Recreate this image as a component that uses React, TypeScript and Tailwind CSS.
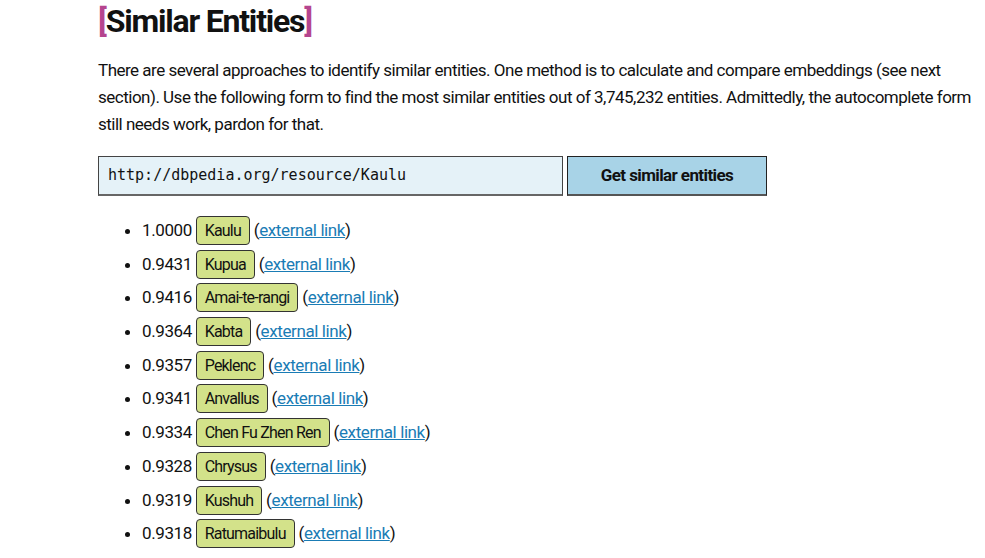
const results: [string, string][] = [
  ['1.0000', 'Kaulu'],
  ['0.9431', 'Kupua'],
  ['0.9416', 'Amai-te-rangi'],
  ['0.9364', 'Kabta'],
  ['0.9357', 'Peklenc'],
  ['0.9341', 'Anvallus'],
  ['0.9334', 'Chen Fu Zhen Ren'],
  ['0.9328', 'Chrysus'],
  ['0.9319', 'Kushuh'],
  ['0.9318', 'Ratumaibulu'],
]

export default function App() {
  return (
    <div
      className="h-[558px] w-[985px] overflow-hidden bg-white pl-[98px] pt-[2px] text-[#111]"
      style={{ fontFamily: 'Roboto, "Liberation Sans", sans-serif' }}
    >
      <h1 className="flex items-center text-[32px] font-bold leading-[38px] tracking-[-1.2px]">
        <span className="text-[#b5458f]">[</span>
        Similar Entities
        <span className="text-[#b5458f]">]</span>
      </h1>

      <p className="mt-[17px] w-[880px] text-[17px] leading-[27px] tracking-[-0.5px]">
        There are several approaches to identify similar entities. One method is to calculate and
        compare embeddings (see next section). Use the following form to find the most similar
        entities out of 3,745,232 entities. Admittedly, the autocomplete form still needs work,
        pardon for that.
      </p>

      <div className="mt-[18px] flex gap-[4px]">
        <div
          className="flex h-[40px] w-[465px] items-center border border-b-2 border-[#444] border-b-[#666] bg-[#e5f2f8] px-[9px] text-[15px]"
          style={{ fontFamily: '"DejaVu Sans Mono", monospace' }}
        >
          http://dbpedia.org/resource/Kaulu
        </div>
        <button className="h-[40px] w-[200px] border border-b-2 border-[#222] border-b-[#555] bg-[#a8d3e7] text-[17px] font-bold tracking-[-0.6px]">
          Get similar entities
        </button>
      </div>

      <ul className="mt-[20px] list-disc pl-[44px] text-[17px] tracking-[-0.4px]">
        {results.map(([score, name]) => (
          <li key={name} className="h-[33.7px]">
            <span>{score} </span>
            <span className="inline-block rounded-[4px] border border-[#333] bg-[#d3e28a] px-[8px] py-[3px] text-[16px] leading-[21px] tracking-[-0.8px]">
              {name}
            </span>{' '}
            (<a className="text-[#1a7cb5] underline" href="#">external link</a>)
          </li>
        ))}
      </ul>
    </div>
  )
}
